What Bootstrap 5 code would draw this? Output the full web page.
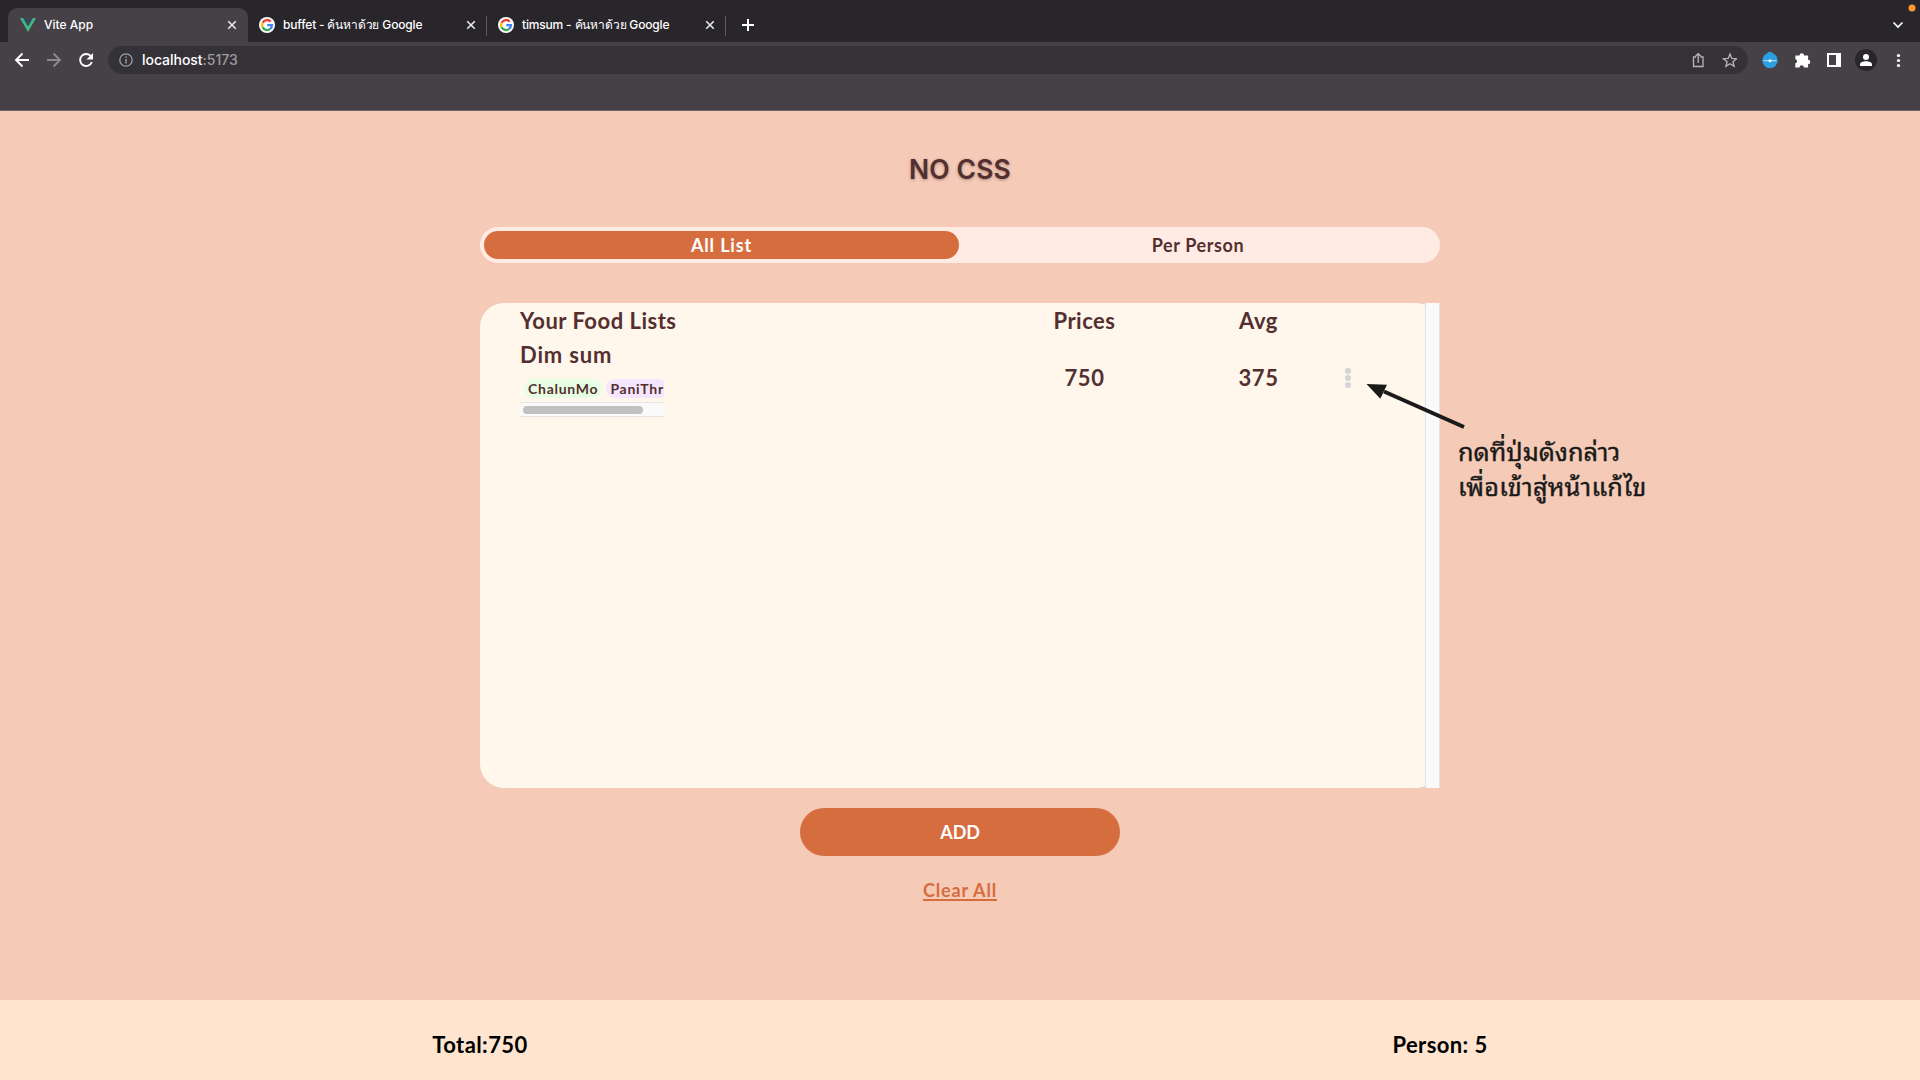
<!DOCTYPE html>
<html lang="th">
<head>
<meta charset="utf-8">
<title>Vite App</title>
<link href="https://cdn.jsdelivr.net/npm/bootstrap@5.3.0/dist/css/bootstrap.min.css" rel="stylesheet">
<style>
:root{--brown:#53302f;--orange:#d66d3f}
body{width:1920px;height:1080px;overflow:hidden;background:#f5cab7;font-family:Lato,"Open Sans","Noto Sans",sans-serif;font-weight:700;color:var(--brown)}
svg{display:block;flex:none}
.chrome{height:111px;background:#454147;border-bottom:1px solid #6b6469;font-family:Inter,"Noto Sans",sans-serif;font-weight:500;color:#fff}
.strip{height:42px;background:#29262b;padding:8px 0 0 8px}
.tab-item{height:34px;font-size:12px;line-height:33px;padding-bottom:1px;white-space:nowrap}
.tab-on{width:240px;background:#454147;border-radius:9px 9px 0 0;padding-left:12px;padding-right:11px}
.tab-off{width:238px;padding-left:11px;padding-right:10px;letter-spacing:-.17px}
.tab-title{padding-left:8px}
.tab-sep{width:1px;height:20px;background:#5d595f}
.tools{height:68px;padding:4px 0 0 14px}
.omni{width:1640px;height:28px;border-radius:14px;background:#353237;padding:0 11px;font-size:14px;line-height:20px;padding-bottom:1px;letter-spacing:-.03px}
.omni .port{color:#9d9a9f}
.omni .addr{padding-left:9px}
.stage{width:960px;margin:0 auto}
.app-title{font-size:26.5px;font-weight:600;line-height:35px;margin-top:41px;height:36px;text-shadow:0 1px 3px rgba(83,48,47,.45);font-family:Inter,sans-serif;letter-spacing:.1px}
.switch{height:36px;margin-top:39px;background:#ffeae4;border-radius:18px;padding:4px;font-size:18px}
.switch>div{flex:1;line-height:29px;border-radius:14px;letter-spacing:.6px;padding-left:1px}
.switch>.active-half{background:var(--orange);color:#fff;flex:0 0 475px;letter-spacing:.85px;padding-left:0}
.panel{height:485px;margin-top:40px;font-size:22px;letter-spacing:.5px}
.panel-body{background:#fff6ec;border-radius:24px;clip-path:inset(0 15px 0 0)}
.list-row{padding-left:40px}
.c-name{width:476px}.c-price{width:177px}.c-avg{width:171px}
.figure-num{padding-top:1px}
.c-dots{margin-top:1px}
.dish{letter-spacing:.85px;padding-top:3px}
.tags{width:144px;height:19px;padding-left:4px;gap:4px;margin-top:10px;font-size:14px;line-height:19px;overflow:hidden}
.tag{flex:none;border-radius:10px;padding:0 4px;height:19px;letter-spacing:.74px}
.hbar{width:144px;height:15px;margin-top:4px;background:#fafafa;border:solid #e6e6e6;border-width:1px 0;padding:3px}
.hbar div{width:120px;height:8px;border-radius:4px;background:#c1c1c1}
.vbar{right:0;top:0;width:15px;background:#fafafa;border:solid #e4e4e4;border-width:0 1px}
.add-btn{width:320px;height:48px;margin-top:20px;border-radius:24px;background:var(--orange);color:#fff;font-size:18px;font-weight:700;border:0;padding:1px 0 0;letter-spacing:-.2px}
.clear{margin-top:20px;height:29px;line-height:29px;font-size:18px;letter-spacing:.8px;color:var(--orange);text-decoration:underline;text-underline-offset:2px;text-decoration-thickness:2px}
.totals{height:80px;left:0;right:0;bottom:0;background:#ffe5cf;color:#000;font-size:22px;line-height:90px;letter-spacing:.4px}
.note{left:1458px;top:432px;font-family:"Noto Sans Thai Looped","Loma","Garuda","Noto Sans",sans-serif;font-weight:400;font-size:25.3px;line-height:35px;color:#191a19;white-space:nowrap;-webkit-text-stroke:.4px #191a19}
.note-wide{letter-spacing:.2px}
.arrow{left:1360px;top:378px}
</style>
<script src="https://cdn.jsdelivr.net/npm/bootstrap@5.3.0/dist/js/bootstrap.bundle.min.js"></script>
</head>
<body class="position-relative">
<svg width="0" height="0" class="position-absolute">
<symbol id="x" viewBox="0 0 10 10"><path d="M1.200 1.200l7.600 7.600M8.800 1.200L1.200 8.800" stroke="#e8e8e8" stroke-width="1.600" fill="none"/></symbol>
<symbol id="g" viewBox="0 0 16 16"><circle cx="8" cy="8" r="8" fill="#fff"/><g fill="none" stroke-width="2.300"><path d="M11.700 4.600A5 5 0 0 0 3.600 5.700" stroke="#ea4335"/><path d="M3.600 5.700a5 5 0 0 0 0 4.600" stroke="#fbbc05"/><path d="M3.600 10.300a5 5 0 0 0 7.600 1.600" stroke="#34a853"/><path d="M11.200 11.900A5 5 0 0 0 13 8.100H8.200" stroke="#4285f4"/></g></symbol>
</svg>
<header class="chrome">
<div class="strip d-flex position-relative">
<div class="tab-item tab-on d-flex align-items-center"><svg width="16" height="14" viewBox="0 0 16 14"><path d="M0 0h3.200L8 8.300 12.800 0H16L8 14z" fill="#41b883"/><path d="M3.200 0h3L8 3.100 9.800 0h3L8 8.300z" fill="#34495e"/></svg><span class="tab-title">Vite App</span><svg class="ms-auto" width="10" height="10"><use href="#x"/></svg></div>
<div class="tab-item tab-off d-flex align-items-center"><svg width="16" height="16"><use href="#g"/></svg><span class="tab-title">buffet - ค้นหาด้วย Google</span><svg class="ms-auto" width="10" height="10"><use href="#x"/></svg></div>
<div class="tab-sep mt-2"></div>
<div class="tab-item tab-off d-flex align-items-center"><svg width="16" height="16"><use href="#g"/></svg><span class="tab-title">timsum - ค้นหาด้วย Google</span><svg class="ms-auto" width="10" height="10"><use href="#x"/></svg></div>
<div class="tab-sep mt-2"></div>
<svg class="ms-3" width="12" height="34" viewBox="0 0 12 34"><path d="M0 17h12M6 11v12" stroke="#fff" stroke-width="2"/></svg>
<svg class="position-absolute end-0 top-0" width="32" height="42" viewBox="0 0 32 42"><circle cx="24" cy="8" r="3.500" fill="#ff9a2e"/><path d="M5.500 22.500l4.500 4.500 4.500-4.500" stroke="#fff" stroke-width="1.700" fill="none"/></svg>
</div>
<div class="tools d-flex">
<svg width="94" height="28" viewBox="14 46 94 28"><g fill="none" stroke="#fff" stroke-width="1.900"><path d="M29 60H16.500M22.500 53.500L16 60l6.500 6.500"/><path d="M47 60h12.500M53.500 53.500L60 60l-6.500 6.500" stroke="#8c898e"/><path d="M91 56.500A6 6 0 1 0 91.800 62"/></g><path d="M93 53v6.500h-6.500z" fill="#fff"/></svg>
<div class="omni d-flex align-items-center"><svg width="14" height="14" viewBox="0 0 14 14"><circle cx="7" cy="7" r="6.200" fill="none" stroke="#9aa0a6" stroke-width="1.300"/><path d="M7 6v4.500M7 3.400v1.500" stroke="#9aa0a6" stroke-width="1.400"/></svg><span class="addr">localhost<span class="port">:5173</span></span>
<svg class="ms-auto" width="48" height="28" viewBox="1689 46 48 28"><g fill="none" stroke="#b8b5ba" stroke-width="1.300"><path d="M1696 57h-2.500v9.500h9.500V57h-2.500M1698.200 63v-9M1695.500 56.300l2.700-2.700 2.700 2.700"/><path d="M1730 54l1.800 4.400 4.700.3-3.600 3 1.200 4.600-4.100-2.500-4.100 2.500 1.200-4.600-3.600-3 4.700-.3z"/></g></svg></div>
<svg width="172" height="28" viewBox="1748 46 172 28"><circle cx="1770" cy="60.500" r="7.700" fill="#2b9fdf"/><path d="M1767.800 52.500h4.400M1770 52v3" stroke="#2b9fdf" stroke-width="1.200"/><path d="M1763.500 60.700h13" stroke="#bfe5f8" stroke-width="1"/><circle cx="1770" cy="60.700" r="1.500" fill="#fff"/><path d="M1795.500 55.500h4a2.300 2.300 0 0 1 4.600 0h4v4.200a2.200 2.200 0 0 1 0 4.400v3.400h-4.200a2.200 2.200 0 0 0-4.400 0h-4.200v-4.200a2.200 2.200 0 0 0 0-4.300z" fill="#fff"/><path d="M1827 53h14v14h-14zM1829 55v10h7V55z" fill="#fff" fill-rule="evenodd"/><circle cx="1866" cy="60" r="11" fill="#29262b"/><circle cx="1866" cy="57" r="3" fill="#fff"/><path d="M1860 66v-1.500c0-2 3-3.200 6-3.200s6 1.200 6 3.200V66z" fill="#fff"/><g fill="#fff"><circle cx="1898.500" cy="55.500" r="1.600"/><circle cx="1898.500" cy="60.500" r="1.600"/><circle cx="1898.500" cy="65.500" r="1.600"/></g></svg>
</div>
</header>
<main class="stage">
<h1 class="app-title text-center mb-0">NO CSS</h1>
<div class="switch d-flex text-center"><div class="active-half">All List</div><div>Per Person</div></div>
<section class="panel position-relative">
<div class="panel-body h-100">
<div class="list-row d-flex" style="line-height:35px"><div class="c-name">Your Food Lists</div><div class="c-price text-center">Prices</div><div class="c-avg text-center">Avg</div></div>
<div class="list-row d-flex align-items-center"><div class="c-name"><div class="dish lh-sm">Dim sum</div><div class="tags d-flex"><span class="tag" style="background:#e8fee4">ChalunMo</span><span class="tag" style="background:#f5e6ff">PaniThr</span></div><div class="hbar"><div></div></div></div><div class="c-price figure-num text-center">750</div><div class="c-avg figure-num text-center">375</div><svg class="c-dots" width="8" height="22" viewBox="0 0 8 22"><g fill="#d5d5d5"><circle cx="4" cy="4" r="3.100"/><circle cx="4" cy="11" r="3.100"/><circle cx="4" cy="18" r="3.100"/></g></svg></div>
</div>
<div class="vbar position-absolute h-100"></div>
</section>
<button class="add-btn d-block mx-auto">ADD</button>
<div class="clear text-center">Clear All</div>
</main>
<svg class="arrow position-absolute" width="110" height="56" viewBox="1360 378 110 56"><path d="M1384 391.500L1464 427" stroke="#191a19" stroke-width="4"/><path d="M1366.500 384l20.500.700-6.700 14z" fill="#191a19"/></svg>
<div class="note position-absolute">กดที่ปุ่มดังกล่าว<br><span class="note-wide">เพื่อเข้าสู่หน้าแก้ไข</span></div>
<footer class="totals position-absolute d-flex text-center"><div class="w-50">Total:750</div><div class="w-50">Person: 5</div></footer>
</body>
</html>
